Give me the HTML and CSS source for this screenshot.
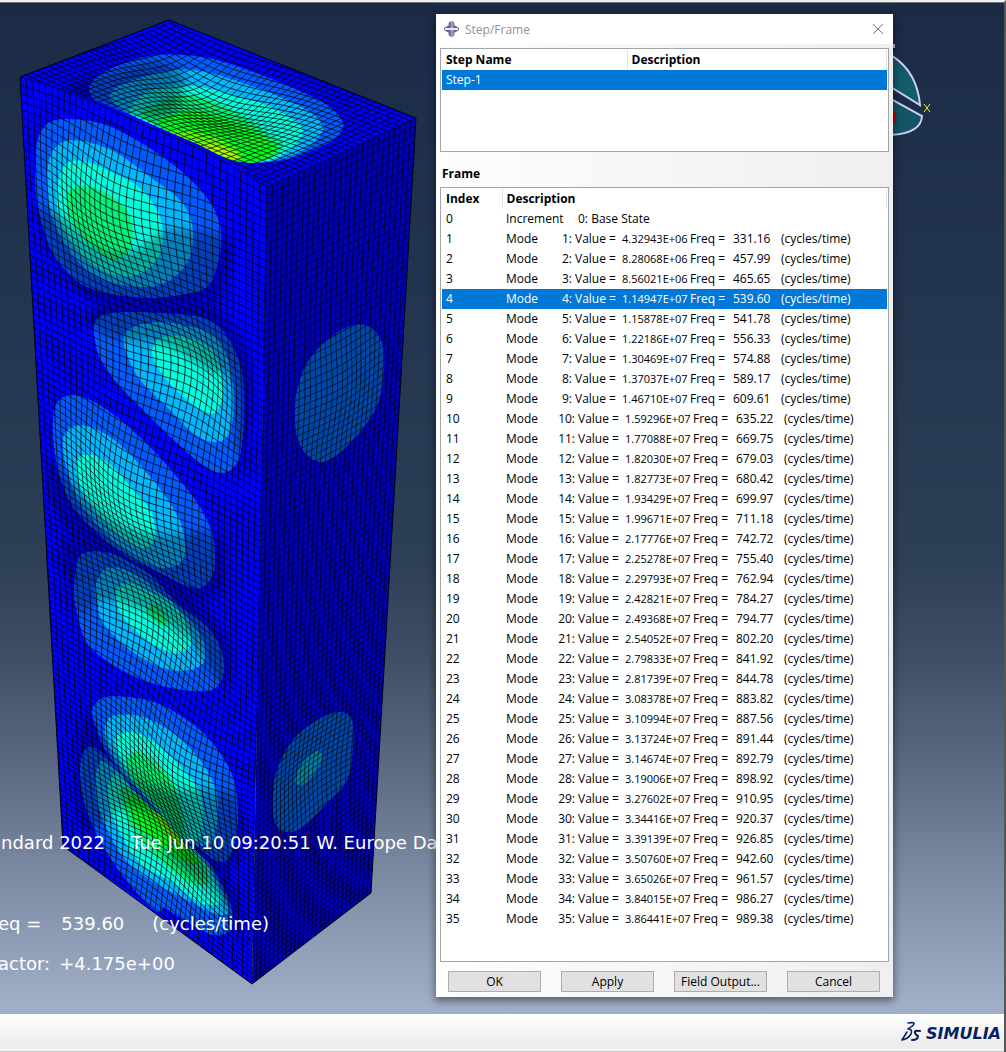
FILE: index.html
```html
<!DOCTYPE html>
<html lang="en">
<head>
<meta charset="utf-8">
<title>Step/Frame</title>
<link rel="stylesheet" href="styles.css">
</head>
<body>
<div class="app">
  <main class="viewport">
    <section class="scene" aria-label="Mode shape contour plot">
      <svg class="model" id="model" viewBox="0 3 436 1011" role="img" aria-label="Deformed box"></svg>
      <div class="captions">
        <p class="caption caption-job"><span>andard 2022</span><span>Tue Jun 10 09:20:51 W. Europe Da</span></p>
        <p class="caption caption-freq"><span>eq =</span><span>539.60</span><span>(cycles/time)</span></p>
        <p class="caption caption-scale"><span>actor:</span><span>+4.175e+00</span></p>
      </div>
    </section>

    <section class="dialog" role="dialog" aria-labelledby="dialog-title">
      <header class="titlebar">
        <svg class="app-icon" viewBox="0 0 16 16" aria-hidden="true">
          <path d="M5 1h1V0h4v1h1v3l2 1 3 2v2l-3 2-2 1v3h-1v1H6v-1H5v-3l-2-1-3-2V7l3-2 2-1z" fill="#66668f"/>
          <path d="M7 0h3v16H7z" fill="#9a9ac6"/>
          <path d="M1 7h14v2H1z" fill="#f0f0fa"/>
        </svg>
        <h1 id="dialog-title">Step/Frame</h1>
        <button class="close" type="button" aria-label="Close">
          <svg viewBox="0 0 12 12" aria-hidden="true"><path d="M1 1l10 10M11 1L1 11" stroke="#777" fill="none"/></svg>
        </button>
      </header>
      <div class="dialog-body">
        <div class="list list-steps">
          <table>
            <colgroup><col class="col-step"><col></colgroup>
            <thead><tr><th>Step Name</th><th>Description</th></tr></thead>
            <tbody><tr class="selected"><td>Step-1</td><td></td></tr></tbody>
          </table>
        </div>
        <h2>Frame</h2>
        <div class="list list-frames">
          <table>
            <colgroup><col class="col-index"><col></colgroup>
            <thead><tr><th>Index</th><th>Description</th></tr></thead>
            <tbody id="frames"></tbody>
          </table>
        </div>
        <div class="actions">
          <button type="button">OK</button>
          <button type="button">Apply</button>
          <button type="button">Field Output...</button>
          <button type="button">Cancel</button>
        </div>
      </div>
    </section>

    <svg class="triad" viewBox="0 0 44 100" aria-hidden="true">
      <path d="M-4 10Q24 26 27 61L-4 42z" fill="#125b6b" stroke="#ccccf4" stroke-width="2"/>
      <path d="M-4 54L29 72Q28 90-4 91z" fill="#125566" stroke="#ccccf4" stroke-width="2"/>
      <path d="M0 68h3v12H0z" fill="#c00000"/>
      <path d="M31 60l6 8M37 60l-6 8" stroke="#f0f020" fill="none"/>
      <path d="M0 0h2v4H0z" fill="#b8c0d0"/>
    </svg>
  </main>
  <footer class="brandbar">
    <svg class="mark" viewBox="0 0 20 20" aria-hidden="true">
      <g fill="none" stroke="#0a1e64" stroke-linecap="round" stroke-linejoin="round">
        <path d="M7 1Q14 0 13 2Q12 4 7 7Q12 7 10 12Q7 17 1 18L6 10" stroke-width="1.6"/>
        <path d="M19 9Q13 8 14 11Q15 13 17 14Q17 18 11 18" stroke-width="2"/>
      </g>
    </svg>
    <span class="brand">SIMULIA</span>
  </footer>
</div>
<script src="app.js"></script>
</body>
</html>
```
FILE: styles.css
```css
* { box-sizing: border-box; }
body { margin: 0; font-family: "Open Sans", "Noto Sans", sans-serif; font-size: 12px; color: #000; }
.app { min-height: 100vh; display: flex; flex-direction: column; border-top: 2px solid #f0f0f0; border-right: 2px solid #55555c; overflow: hidden; }
.viewport {
  flex: 1; display: flex; align-items: flex-start; position: relative;
  border-top: 1px solid #6c727c; overflow: hidden;
  background: linear-gradient(#1b2b45 0%, #22334d 25%, #2d3e57 55%, #3f4f67 65%, #5f6e86 77%, #8190a8 88%, #a2b1ca 100%);
}
.scene { flex: none; position: relative; width: 436px; }
.model { display: block; width: 100%; height: auto; }
.front-lines, .right-lines, .top-lines { fill: none; stroke: #000; }
.front-lines { stroke-opacity: .75; }
.top-lines { stroke-opacity: .75; }
.right-lines { stroke-opacity: .65; }
.outline { fill: none; stroke: #000018; }

.captions { position: absolute; inset: 0; overflow: hidden; color: #fff; font: 18px/20px "DejaVu Sans", sans-serif; white-space: nowrap; }
.caption { position: absolute; margin: 0; display: flex; }
.caption-job { top: 830px; left: -10px; gap: 26px; }
.caption-freq { top: 911px; left: -2px; gap: 20px; }
.caption-freq span:last-child { margin-left: 8px; }
.caption-scale { top: 951px; left: -2px; gap: 9px; }

.dialog { position: relative; z-index: 1; flex: 0 1 457px; margin-top: 11px; background: #fff; box-shadow: 0 3px 8px 1px rgba(0, 0, 0, .45); }
.titlebar { display: flex; align-items: center; height: 30px; padding: 0 8px; gap: 6px; }
.app-icon { width: 15px; height: 16px; }
.titlebar h1 { flex: 1; margin: 0; font-size: 12px; font-weight: 400; color: #929292; }
.close { display: grid; place-items: center; width: 14px; height: 14px; padding: 0; border: 0; background: none; }
.close svg { width: 12px; height: 12px; }
.dialog-body { padding: 4px 4px 5px; background: linear-gradient(90deg, #fdfdfd, #efefef); }
.dialog h2 { margin: 0; padding: 17px 2px 8px; font-size: 12px; line-height: 10px; font-weight: 700; }
.list { background: #fff; border: 1px solid #a3a6a8; padding: 1px 1px 0; }
.list-steps { height: 104px; }
.list-frames { min-height: 775px; }
table { width: 100%; border-collapse: collapse; table-layout: fixed; }
.col-step { width: 185px; }
.col-index { width: 60px; }
th, td { height: 20px; padding: 0 4px; line-height: 20px; text-align: left; white-space: nowrap; overflow: hidden; }
th { border-right: 1px solid #e3e3e3; }
.selected { background: #0078d7; color: #fff; }
.frame { display: grid; grid-template-columns: 52px 14px 50px 68px 43px 48px 1fr; }
.frame.wide { grid-template-columns: 52px 17px 50px 68px 43px 48px 1fr; }
.frame > :nth-child(2) { text-align: right; }
.frame > :nth-child(3) { padding-left: 3px; }
.frame > :nth-child(4) { font-size: 11px; }
.frame.base { grid-template-columns: 72px 1fr; }
.frame.base > :nth-child(2) { text-align: left; }
.actions { display: flex; gap: 20px; padding: 9px 9px 0 8px; }
.actions button { flex: 1; height: 21px; padding: 0; border: 1px solid #adadad; background: #e1e1e1; font: inherit; line-height: 18px; color: #000; white-space: nowrap; }

.triad { position: absolute; left: 893px; top: 41px; width: 44px; height: 100px; }

.brandbar { display: flex; justify-content: flex-end; align-items: center; gap: 5px; height: 38px; padding: 0 3px 0 0; background: linear-gradient(#fff, #ececec 85%, #f4f4f4); border-bottom: 1px solid #c8c8c8; }
.mark { width: 20px; height: 22px; margin-bottom: 2px; }
.brand { padding-top: 2px; font: italic 700 16px/20px "DejaVu Sans", sans-serif; color: #0a1e64; }
```
FILE: app.js
```js
/* Frame list: value and frequency of each mode */
const modes = [
  ["4.32943E+06", "331.16"], ["8.28068E+06", "457.99"], ["8.56021E+06", "465.65"], ["1.14947E+07", "539.60"],
  ["1.15878E+07", "541.78"], ["1.22186E+07", "556.33"], ["1.30469E+07", "574.88"], ["1.37037E+07", "589.17"],
  ["1.46710E+07", "609.61"], ["1.59296E+07", "635.22"], ["1.77088E+07", "669.75"], ["1.82030E+07", "679.03"],
  ["1.82773E+07", "680.42"], ["1.93429E+07", "699.97"], ["1.99671E+07", "711.18"], ["2.17776E+07", "742.72"],
  ["2.25278E+07", "755.40"], ["2.29793E+07", "762.94"], ["2.42821E+07", "784.27"], ["2.49368E+07", "794.77"],
  ["2.54052E+07", "802.20"], ["2.79833E+07", "841.92"], ["2.81739E+07", "844.78"], ["3.08378E+07", "883.82"],
  ["3.10994E+07", "887.56"], ["3.13724E+07", "891.44"], ["3.14674E+07", "892.79"], ["3.19006E+07", "898.92"],
  ["3.27602E+07", "910.95"], ["3.34416E+07", "920.37"], ["3.39139E+07", "926.85"], ["3.50760E+07", "942.60"],
  ["3.65026E+07", "961.57"], ["3.84015E+07", "986.27"], ["3.86441E+07", "989.38"]
];
const frameRows = ['<tr><td>0</td><td><div class="frame base"><span>Increment</span><span>0: Base State</span></div></td></tr>'];
modes.forEach(([value, freq], i) => {
  const n = i + 1;
  frameRows.push(`<tr${n === 4 ? ' class="selected"' : ""}><td>${n}</td><td><div class="frame${n > 9 ? " wide" : ""}">` +
    `<span>Mode</span><span>${n}:</span><span>Value =</span><span>${value}</span><span>Freq =</span><span>${freq}</span><span>(cycles/time)</span></div></td></tr>`);
});
document.getElementById("frames").innerHTML = frameRows.join("");

/* Contour bands, outermost first: colour, then x,y pairs of a closed curve */
const BAND = ["#005cff", "#00b8ff", "#00ffe0", "#00f47c", "#00ff1e", "#62ff00", "#b0f800"];
const topBands = [
  [89,90, 97,77, 120,65, 150,56, 183,55, 217,60, 253,72, 293,88, 327,105, 343,123, 337,137, 320,147, 293,158, 267,162, 240,161, 200,146, 133,117, 100,104],
  [110,97, 117,87, 140,78, 167,71, 200,71, 240,82, 280,97, 310,112, 323,128, 313,143, 293,155, 267,162, 240,161, 200,146, 150,125, 123,110],
  [130,110, 143,95, 167,87, 200,87, 240,97, 273,108, 297,123, 303,133, 293,147, 277,158, 260,162, 240,161, 200,146, 143,121],
  [143,117, 160,102, 187,95, 217,103, 247,118, 267,133, 283,143, 273,157, 260,161, 240,161, 200,146],
  [160,125, 173,115, 200,112, 233,122, 257,133, 277,150, 260,161, 235,161, 200,146],
  [170,133, 193,132, 220,140, 240,152, 240,160, 225,157, 200,146],
  [200,144, 216,145, 232,152, 238,159, 225,157]
];
const frontLobes = [
  [[50,122, 67,119, 100,123, 133,138, 167,160, 193,182, 213,207, 221,233, 218,263, 207,287, 180,295, 150,298, 117,295, 87,287, 67,272, 50,247, 38,207, 35,173, 37,143, 42,130],
   [63,142, 87,142, 117,153, 150,177, 177,197, 190,217, 193,240, 187,263, 167,282, 143,287, 113,283, 87,270, 67,247, 52,217, 47,187, 50,157],
   [67,163, 87,162, 113,173, 140,188, 158,212, 163,237, 157,260, 137,275, 113,275, 90,262, 70,240, 58,213, 58,183],
   [70,190, 90,187, 113,197, 128,213, 133,233, 128,252, 113,260, 93,248, 77,230, 67,210]],
  [[94,325, 103,315, 127,312, 160,313, 200,317, 220,328, 233,347, 242,373, 244,410, 242,443, 237,463, 223,473, 203,465, 177,443, 143,410, 117,383, 100,358, 95,340],
   [124,337, 133,327, 160,322, 193,327, 213,335, 227,357, 233,387, 233,417, 227,437, 213,442, 193,433, 167,407, 140,380, 127,355],
   [153,347, 163,337, 187,337, 210,348, 220,367, 223,393, 215,413, 197,407, 173,387, 155,363]],
  [[53,420, 57,403, 70,395, 90,400, 117,417, 150,447, 177,477, 200,507, 213,537, 214,570, 203,587, 187,586, 160,573, 127,557, 97,533, 73,507, 60,477, 54,447],
   [63,440, 72,427, 90,427, 117,442, 147,473, 170,503, 183,530, 183,560, 163,568, 137,558, 107,535, 80,503, 67,470],
   [77,460, 93,455, 113,467, 133,490, 152,513, 154,540, 143,548, 123,538, 97,513, 80,487]],
  [[74,590, 78,560, 88,552, 110,553, 133,563, 153,577, 177,603, 200,620, 217,640, 224,663, 220,683, 207,691, 177,689, 143,680, 110,663, 87,643, 77,613],
   [95,587, 107,568, 133,573, 160,593, 187,617, 203,640, 205,660, 190,670, 163,668, 130,650, 103,623, 97,600],
   [115,593, 128,583, 150,592, 173,603, 188,627, 190,647, 173,653, 147,640, 123,617],
   [147,612, 155,603, 165,613, 167,625, 157,623]],
  [[80,773, 83,753, 92,747, 110,760, 133,787, 160,813, 180,837, 207,860, 223,887, 232,910, 230,930, 213,935, 187,922, 165,908, 160,912, 152,908, 133,888, 113,862, 97,835, 85,805],
   [95,787, 100,762, 113,767, 133,790, 160,817, 182,840, 207,863, 223,893, 228,913, 213,913, 187,900, 150,880, 123,857, 103,820],
   [107,793, 117,773, 133,790, 160,817, 182,840, 203,860, 217,887, 220,903, 200,903, 173,883, 140,863, 117,827],
   [120,793, 130,788, 153,810, 180,840, 203,863, 207,883, 190,883, 160,860, 133,830],
   [128,800, 143,800, 180,838, 197,860, 187,863, 160,843, 140,827],
   [153,813, 167,820, 183,842, 173,842]],
  [[92,710, 103,698, 127,697, 157,703, 187,720, 210,740, 230,770, 237,797, 237,833, 227,860, 213,859, 193,843, 180,837, 160,813, 133,787, 107,753, 97,730],
   [106,723, 117,715, 143,717, 173,733, 200,760, 215,787, 218,813, 213,840, 200,846, 180,837, 153,803, 123,773, 107,743],
   [115,743, 125,732, 147,737, 177,763, 197,787, 203,810, 200,837, 187,840, 160,813, 130,777],
   [127,760, 140,752, 160,767, 173,783, 182,810, 183,837, 160,810, 133,780]]
];
const rightLobes = [
  ["#0048a8", [295,413, 297,390, 307,363, 327,340, 350,326, 370,327, 382,343, 384,367, 380,397, 367,423, 343,450, 323,462, 307,455, 297,437]],
  ["#0048a8", [273,793, 278,767, 293,740, 317,720, 340,712, 352,720, 353,747, 347,780, 327,803, 303,827, 287,832, 275,823]],
  ["#0080a4", [295,780, 303,762, 317,751, 322,757, 315,773, 302,785]]
];
/* Faces of the panel that turn away from the light */
const shades = [
  [60,215, 100,250, 135,250, 170,230, 230,240, 225,280, 205,310, 150,315, 90,300, 55,260, 35,210],
  [90,312, 130,300, 200,305, 245,340, 252,400, 245,465, 235,440, 232,380, 210,370, 165,345, 125,340, 92,328],
  [50,460, 80,490, 120,525, 160,535, 220,535, 222,590, 190,600, 130,570, 80,545, 50,500],
  [60,545, 120,535, 160,570, 220,625, 232,665, 222,685, 190,640, 140,608, 100,600, 78,612],
  [85,715, 105,740, 135,775, 165,790, 200,790, 240,800, 240,860, 210,865, 175,840, 150,812, 120,808, 85,830, 75,760],
  [165,850, 205,850, 240,900, 240,940, 220,900]
];
const topShade = [70,85, 110,72, 160,62, 185,80, 165,118, 110,108, 80,98];

function curve(p) {
  const n = p.length / 2, pt = i => { const k = ((i % n) + n) % n; return [p[2 * k], p[2 * k + 1]]; };
  let d = `M${pt(0)}`;
  for (let i = 0; i < n; i++) {
    const [a, b, c, e] = [pt(i - 1), pt(i), pt(i + 1), pt(i + 2)];
    d += `C${b[0] + (c[0] - a[0]) / 6} ${b[1] + (c[1] - a[1]) / 6} ${c[0] - (e[0] - b[0]) / 6} ${c[1] - (e[1] - b[1]) / 6} ${c[0]} ${c[1]}`;
  }
  return d + "Z";
}

/* Bulges of the mesh: centre, radii along and across, angle, shift */
const bulges = {
  front: [
    [110, 210, 85, 65, 60, -20, 12], [195, 370, 75, 45, 55, 14, -11], [125, 495, 85, 48, 58, -15, 11],
    [155, 620, 75, 45, 45, 12, -10], [175, 775, 70, 45, 52, -14, 12], [165, 845, 75, 42, 48, 12, -11]
  ],
  top: [[215, 105, 85, 42, 24, 3, 22]],
  right: [[340, 392, 60, 36, -65, 5, 4], [315, 770, 55, 36, -60, -5, -5]]
};
function shift([x, y], list) {
  let dx = 0, dy = 0;
  for (const [cx, cy, ra, rb, deg, sx, sy] of list) {
    const t = deg * Math.PI / 180, ux = x - cx + sx, uy = y - cy + sy;
    const a = (ux * Math.cos(t) + uy * Math.sin(t)) / ra, b = (-ux * Math.sin(t) + uy * Math.cos(t)) / rb;
    const w = Math.exp(-1.4 * (a * a + b * b));
    dx += sx * w; dy += sy * w;
  }
  return [x + dx, y + dy];
}
function mesh([p, q, r, s], cols, rows, k, list, bow) {
  const at = (u, v0) => {
    const v = v0 * (1 + k) - k * v0 * v0;
    const mix = i => (p[i] * (1 - u) + q[i] * u) * (1 - v) + (s[i] * (1 - u) + r[i] * u) * v;
    const pt = shift([mix(0), mix(1)], list);
    pt[1] -= bow * Math.sin(Math.PI * u) * Math.exp(-v * 25);
    return pt;
  };
  const line = f => { let d = ""; for (let i = 0; i <= 90; i++) { const [x, y] = f(i / 90); d += (i ? "L" : "M") + x.toFixed(1) + " " + y.toFixed(1); } return d; };
  let d = "";
  for (let c = 0; c <= cols; c++) d += line(t => at(c / cols, t));
  for (let r2 = 0; r2 <= rows; r2++) d += line(t => at(t, r2 / rows));
  return d;
}
const A = [20, 77], B = [267, 187], C = [252, 984], D = [63, 846], E = [416, 118], F = [371, 893], G = [169, 20];
const frontOutline = "M20 77L60 88L100 102L133 116L167 131L200 145L233 163L267 187L252 984L63 846Z";
const bands = list => list.map((p, i) => `<path d="${curve(p)}" fill="${BAND[i]}"/>`).join("");
document.getElementById("model").innerHTML = `
  <defs>
    <clipPath id="clip-top"><path d="M20 77L169 20L416 118L267 187Z"/></clipPath>
    <clipPath id="clip-front"><path d="${frontOutline}"/></clipPath>
    <clipPath id="clip-right"><path d="M267 187L416 118L371 893L252 984Z"/></clipPath>
    <filter id="soft" x="-20%" y="-20%" width="140%" height="140%"><feGaussianBlur stdDeviation="4"/></filter>
  </defs>
  <g clip-path="url(#clip-top)">
    <path d="M20 77L169 20L416 118L267 187Z" fill="#0000f8"/>
    ${bands(topBands)}
    <path d="${curve(topShade)}" fill="#000030" opacity=".32" filter="url(#soft)"/>
    <path class="top-lines" d="${mesh([A, G, E, B], 26, 37, 0, bulges.top, 0)}"/>
  </g>
  <g clip-path="url(#clip-right)">
    <path d="M267 187L416 118L371 893L252 984Z" fill="#0000b4"/>
    ${rightLobes.map(([c, p]) => `<path d="${curve(p)}" fill="${c}"/>`).join("")}
    <path class="right-lines" d="${mesh([B, E, F, C], 28, 118, 0.23, bulges.right, 0)}"/>
  </g>
  <g clip-path="url(#clip-front)">
    <path d="${frontOutline}" fill="#0000ff"/>
    ${frontLobes.map(bands).join("")}
    <g fill="#000028" opacity=".3" filter="url(#soft)">${shades.map(p => `<path d="${curve(p)}"/>`).join("")}</g>
    <path class="front-lines" d="${mesh([A, B, C, D], 38, 118, 0.23, bulges.front, 14)}"/>
  </g>
  <path class="outline" d="M20 77L169 20L416 118L371 893L252 984L63 846Z"/>`;
```
